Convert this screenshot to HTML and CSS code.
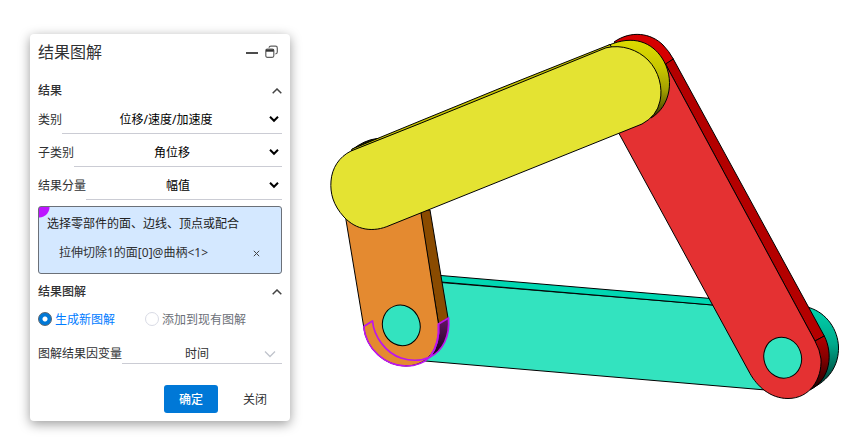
FILE: index.html
```html
<!DOCTYPE html>
<html lang="zh-CN">
<head>
<meta charset="utf-8">
<title>结果图解</title>
<link rel="stylesheet" href="styles.css">
</head>
<body>
<main class="workspace">
  <form class="panel">
    <header class="panel-header">
      <h1>结果图解</h1>
      <button type="button" class="icon-button" aria-label="最小化">
        <svg width="12" height="14" viewBox="0 0 12 14"><path d="M0 8H12" stroke="#4c4c4c" stroke-width="2"/></svg>
      </button>
      <button type="button" class="icon-button" aria-label="还原">
        <svg width="13" height="14" viewBox="0 0 13 14" fill="none" stroke="#606060" stroke-width="1.2"><path d="M4 2.8Q4.200 1.100 6 1.100H10.500Q12.300 1.100 12.300 2.900V7Q12.300 8.700 10.300 9"/><rect x=".8" y="4" width="8" height="8.300" rx="1.500"/><path d="M1 5.500H8.800" stroke="#333" stroke-width="2.400"/></svg>
      </button>
    </header>

    <button type="button" class="section-heading" aria-expanded="true">结果
      <svg width="10" height="6" viewBox="0 0 10 6"><path d="M.7 5.300L5 1L9.300 5.300" fill="none" stroke="#444" stroke-width="1.500"/></svg>
    </button>
    <div class="field">
      <label for="category">类别</label>
      <div class="select-box">
        <select id="category"><option>位移/速度/加速度</option></select>
        <svg class="arrow" width="10" height="8" viewBox="0 0 10 8"><path d="M1 1.800L5 5.800L9 1.800" fill="none" stroke="#000" stroke-width="2"/></svg>
      </div>
    </div>
    <div class="field">
      <label for="subcategory">子类别</label>
      <div class="select-box">
        <select id="subcategory"><option>角位移</option></select>
        <svg class="arrow" width="10" height="8" viewBox="0 0 10 8"><path d="M1 1.800L5 5.800L9 1.800" fill="none" stroke="#000" stroke-width="2"/></svg>
      </div>
    </div>
    <div class="field">
      <label for="component">结果分量</label>
      <div class="select-box">
        <select id="component"><option>幅值</option></select>
        <svg class="arrow" width="10" height="8" viewBox="0 0 10 8"><path d="M1 1.800L5 5.800L9 1.800" fill="none" stroke="#000" stroke-width="2"/></svg>
      </div>
    </div>

    <div class="selection">
      <p>选择零部件的面、边线、顶点或配合</p>
      <div class="selection-item">
        <span>拉伸切除1的面[0]@曲柄&lt;1&gt;</span>
        <button type="button" class="icon-button" aria-label="移除">
          <svg width="7" height="7" viewBox="0 0 7 7"><path d="M.8 .8L6.200 6.200M6.200 .8L.8 6.200" stroke="#444" stroke-width="1"/></svg>
        </button>
      </div>
    </div>

    <button type="button" class="section-heading plot-heading" aria-expanded="true">结果图解
      <svg width="10" height="6" viewBox="0 0 10 6"><path d="M.7 5.300L5 1L9.300 5.300" fill="none" stroke="#444" stroke-width="1.500"/></svg>
    </button>
    <div class="radios">
      <label><input type="radio" name="plot" checked><span>生成新图解</span></label>
      <label><input type="radio" name="plot"><span>添加到现有图解</span></label>
    </div>
    <div class="field compact">
      <label for="variable">图解结果因变量</label>
      <div class="select-box">
        <select id="variable"><option>时间</option></select>
        <svg class="arrow" width="12" height="8" viewBox="0 0 12 8"><path d="M1 1.500L6 6.500L11 1.500" fill="none" stroke="#c0c4cc" stroke-width="1.300"/></svg>
      </div>
    </div>
    <footer class="actions">
      <button type="submit" class="primary">确定</button>
      <button type="button">关闭</button>
    </footer>
  </form>

  <svg class="model" viewBox="290 0 573 439" preserveAspectRatio="xMinYMin meet" role="img" aria-label="四连杆机构">
    <defs>
      <linearGradient id="yellow-edge" x1="0" y1="0" x2="0" y2="1"><stop offset="0" stop-color="#dddb00"/><stop offset=".35" stop-color="#c9c700"/><stop offset=".65" stop-color="#a09e00"/><stop offset="1" stop-color="#333200"/></linearGradient>
      <linearGradient id="red-edge" x1="0" y1="0" x2="0" y2="1"><stop offset="0" stop-color="#b40000"/><stop offset=".4" stop-color="#860000"/><stop offset="1" stop-color="#180000"/></linearGradient>
      <linearGradient id="green-edge" x1="0" y1="0" x2="0" y2="1"><stop offset="0" stop-color="#00d3ad"/><stop offset=".45" stop-color="#00a98b"/><stop offset="1" stop-color="#002f27"/></linearGradient>
      <linearGradient id="picked-edge" x1="0" y1="0" x2="0" y2="1"><stop offset="0" stop-color="#651565"/><stop offset="1" stop-color="#180018"/></linearGradient>
    </defs>
    <g stroke="#000" stroke-width="1" stroke-linejoin="round">
      <path fill="#33e3bf" d="M435 282L713 305L790 325V391L762 389.700L425 361Z"/>
      <path fill="#00d7b2" d="M435 275L711 298.500L716 305.300L435 281.500Z"/>
      <path fill="url(#green-edge)" d="M809 307.500C827 313 838 330 838.500 347C839 365 829 381 810 389L800 350Z"/>
      <path fill="#d60000" d="M614 42C631 30 651 33 663 45Q669 51 673.300 59L665.700 65L636 60Z"/>
      <path fill="#b40000" d="M665.500 64L673.300 59L824.300 336L815 341Z"/>
      <path fill="url(#red-edge)" d="M815 341L824.300 336C833 353 831 379 810 390Z"/>
      <path fill="#e43132" d="M619 133.500L750 373.500C757 386 770 398.500 788 398.500C810 398.500 822 379 821 359Q820 350 815 341L665.500 64L630 80Z"/>
      <ellipse cx="782.700" cy="357.700" rx="18.700" ry="20.700" fill="#33e3bf" transform="rotate(-20 782.700 357.700)"/>
      <path fill="#191900" d="M351 150.500Q364 140 377 138.500L382 139Z"/>
      <path fill="#8a4b00" d="M420 210H430L448 318L438.500 324Z"/>
      <path fill="#e48a30" d="M345 214L363.700 326.700C366 349 385 366 406 366C429 366 441 346 438.500 324L420.500 210Z"/>
      <ellipse cx="401.300" cy="325.400" rx="18.700" ry="20.500" fill="#33e3bf" transform="rotate(-20 401.300 325.400)"/>
      <path fill="url(#yellow-edge)" d="M608 45.500C634 34 652 43 662 58C675 78 671 106 651 118L630 90Z"/>
      <path fill="#c7c500" d="M352 149L420 121L500 88.300L610 44.500L612 48L352 151Z"/>
      <path fill="#e4e332" d="M351 151L420 123.500L500 91L606 47.800C622 44 638 50 648 60C659 71 663 88 660 101Q657 116 642 124L390 225.300C373 233 356 230 344 217C333 205 330 193 331 181C332 168 339 157 351 151Z"/>
    </g>
    <g stroke="#bd15ed" stroke-width="1.700" stroke-linejoin="round">
      <path fill="url(#picked-edge)" d="M438.500 324L448.500 318C450 336 443 351 430 357Q440 343 438.500 324Z"/>
      <path fill="none" d="M363.700 326.500L372.500 321C374 337 386 353 401 358Q417 363 430 357Q440 343 438.500 324M363.700 326.500C366 349 385 366 406 366Q421 366 430 357"/>
    </g>
  </svg>
</main>
</body>
</html>
```
FILE: styles.css
```css
* { box-sizing: border-box; }

body {
  margin: 0;
  background: #fff;
  color: #303133;
  font-family: "Noto Sans", "Noto Sans CJK SC", sans-serif;
  font-size: 12px;
  line-height: 20px;
}

button, select { font: inherit; color: inherit; }

button {
  border: 0;
  padding: 0;
  background: transparent;
}

svg { display: block; }

.workspace {
  display: flex;
  align-items: flex-start;
}

.panel {
  flex: 0 0 260px;
  margin: 34px 0 16px 30px;
  padding: 8px;
  background: #fff;
  border-radius: 4px;
  box-shadow: 0 3px 12px rgba(0, 0, 0, .4);
}

.panel-header {
  display: flex;
  align-items: center;
  gap: 7px;
  height: 20px;
  margin-bottom: 17px;
  padding-right: 4px;
}

.panel-header h1 {
  flex: 1;
  margin: 0;
  font-size: 16px;
  font-weight: 400;
}

.section-heading {
  display: flex;
  align-items: center;
  justify-content: space-between;
  width: 100%;
  height: 22px;
  padding-top: 2px;
  font-weight: 500;
}

.plot-heading { margin-top: 6px; }

.field {
  display: flex;
  align-items: stretch;
  height: 33px;
  padding-top: 4px;
}

.field label {
  display: flex;
  align-items: center;
}

.select-box {
  position: relative;
  flex: 1;
  display: flex;
  border-bottom: 1px solid #cbccd4;
}

.select-box select {
  appearance: none;
  width: 100%;
  border: 0;
  padding: 2px 12px 0 0;
  background: transparent;
  color: #000;
  text-align: center;
  text-align-last: center;
}

.arrow {
  position: absolute;
  right: 3px;
  top: 50%;
  transform: translateY(-50%);
  pointer-events: none;
}

.selection {
  margin-top: 6px;
  padding: 7px 8px 10px;
  border: 1px solid #6b7078;
  border-radius: 3px;
  background: radial-gradient(circle at 0 0, #bd15ff 10px, transparent 11px) #d4e8ff;
}

.selection p {
  margin: 0 0 9px;
  color: #222;
}

.selection-item {
  display: flex;
  align-items: center;
  justify-content: space-between;
  padding: 0 13px 0 12px;
}

.radios {
  display: flex;
  gap: 30px;
  height: 34px;
}

.radios label {
  display: flex;
  align-items: center;
  gap: 3px;
  color: #6c7078;
}

.radios input {
  appearance: none;
  width: 14px;
  height: 14px;
  margin: 0;
  border: 1px solid #d9dbe5;
  border-radius: 50%;
  background: #fff;
}

.radios input:checked {
  border-color: #58636e;
  background: radial-gradient(circle, #fff 2px, #0078d7 3px);
}

.radios span { padding-top: 2px; }

.radios input:checked + span { color: #007bff; }

.compact {
  height: 20px;
  margin-top: 8px;
  padding-top: 0;
}

.compact select {
  padding-top: 0;
  padding-right: 10px;
  color: #303133;
}

.compact .arrow { right: 6px; }

.actions {
  display: flex;
  justify-content: flex-end;
  gap: 10px;
  margin-top: 21px;
}

.actions button {
  width: 54px;
  height: 28px;
  padding-top: 2px;
  border-radius: 3px;
}

.actions .primary {
  background: #0078d7;
  color: #fff;
  font-weight: 500;
}

.model {
  flex: 1;
  min-width: 0;
}
```
